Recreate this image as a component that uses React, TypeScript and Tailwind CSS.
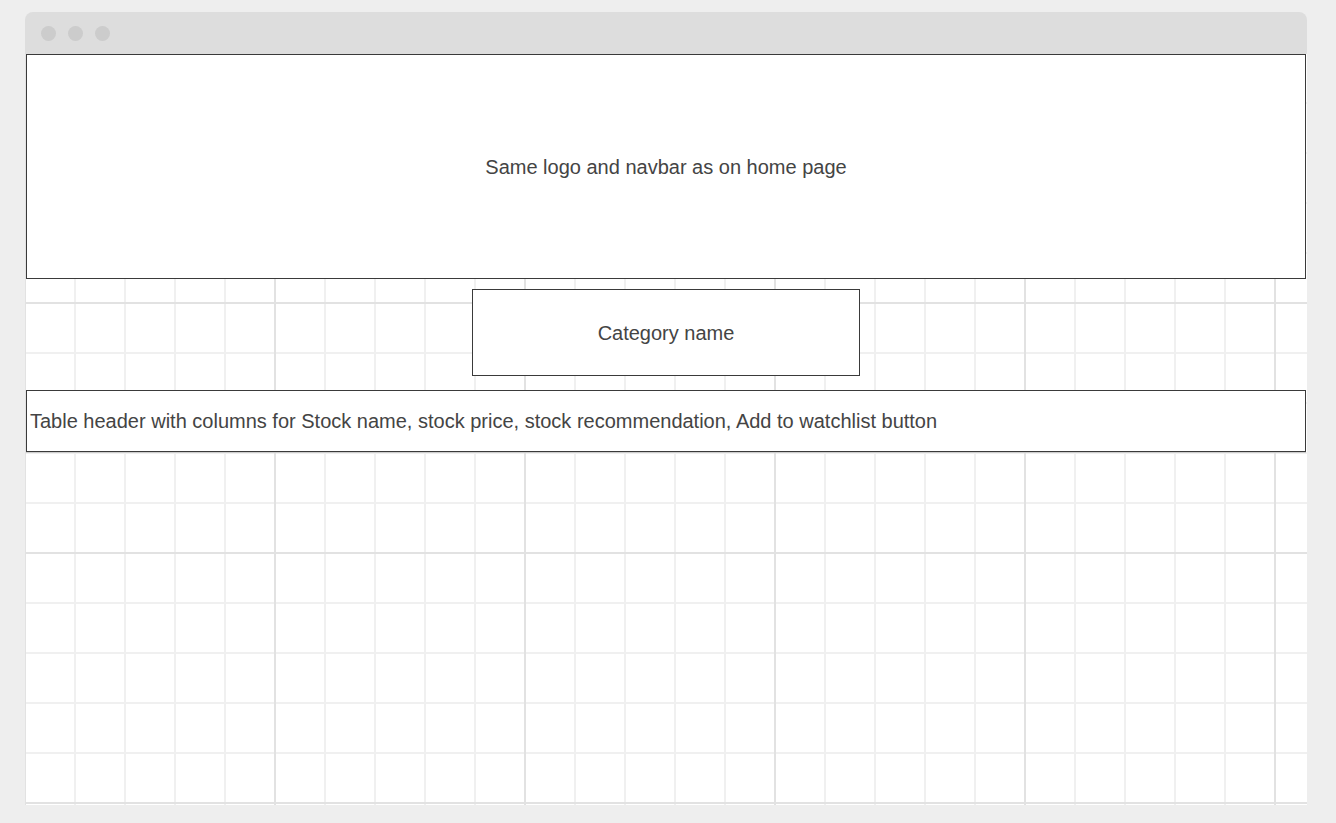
export default function App() {
  return (
    <div className="h-[823px] w-full bg-[#eeeeee] px-[25px] pt-[12px] font-['Liberation_Sans',Arial,sans-serif] text-[#444444]">
      <div className="w-[1282px]">
        {/* Window chrome */}
        <div className="flex h-[42px] items-center gap-[12px] rounded-t-[8px] bg-[#dddddd] pl-[16px]">
          <span className="h-[15px] w-[15px] rounded-full bg-[#cccccc]" />
          <span className="h-[15px] w-[15px] rounded-full bg-[#cccccc]" />
          <span className="h-[15px] w-[15px] rounded-full bg-[#cccccc]" />
        </div>

        {/* Canvas with grid */}
        <div className="h-[751px] bg-white bg-[image:linear-gradient(to_right,#e2e2e2_2px,transparent_2px),linear-gradient(to_bottom,#e2e2e2_2px,transparent_2px),linear-gradient(to_right,#f0f0f0_2px,transparent_2px),linear-gradient(to_bottom,#f0f0f0_2px,transparent_2px)] bg-[size:250px_250px,250px_250px,50px_50px,50px_50px] bg-[position:-1px_-2px] px-[1px]">
          <div className="flex h-[225px] items-center justify-center border border-[#3a3a3a] bg-white text-[20px]">
            Same logo and navbar as on home page
          </div>

          <div className="mt-[10px] flex justify-center">
            <div className="flex h-[87px] w-[388px] items-center justify-center border border-[#3a3a3a] bg-white text-[20px]">
              Category name
            </div>
          </div>

          <div className="mt-[14px] flex h-[62px] items-center border border-[#3a3a3a] bg-white pl-[3px] text-[20px] shadow-[0_1px_0_#cccccc]">
            Table header with columns for Stock name, stock price, stock recommendation, Add to watchlist button
          </div>
        </div>
      </div>
    </div>
  );
}
